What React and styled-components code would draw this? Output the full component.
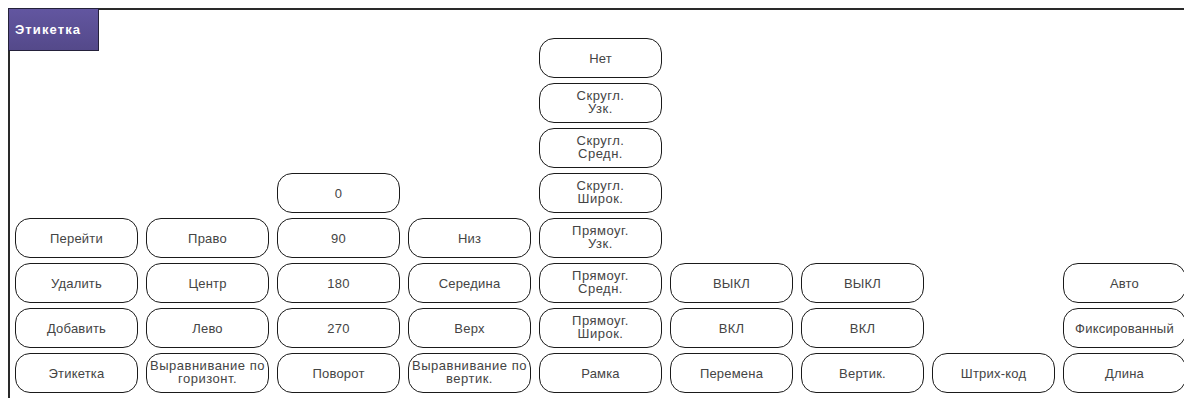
import React from 'react'
import styled, { createGlobalStyle } from 'styled-components'

const GlobalStyle = createGlobalStyle`
  html, body {
    margin: 0;
    background: #fff;
    overflow: hidden;
  }
  body {
    padding: 8px 0 0 8px;
    font-family: "Liberation Sans", Arial, sans-serif;
  }
`

// each column lists its keys from top to bottom, stacked to the bottom edge
const columns = [
  ['Перейти', 'Удалить', 'Добавить', 'Этикетка'],
  ['Право', 'Центр', 'Лево', 'Выравнивание по\nгоризонт.'],
  ['0', '90', '180', '270', 'Поворот'],
  ['Низ', 'Середина', 'Верх', 'Выравнивание по\nвертик.'],
  [
    'Нет',
    'Скругл.\nУзк.',
    'Скругл.\nСредн.',
    'Скругл.\nШирок.',
    'Прямоуг.\nУзк.',
    'Прямоуг.\nСредн.',
    'Прямоуг.\nШирок.',
    'Рамка',
  ],
  ['ВЫКЛ', 'ВКЛ', 'Перемена'],
  ['ВЫКЛ', 'ВКЛ', 'Вертик.'],
  ['Штрих-код'],
  ['Авто', 'Фиксированный', 'Длина'],
]

const App = () => {
  return (
    <>
      <GlobalStyle />
      <Frame>
        <Title>Этикетка</Title>
        <Grid>
          {columns.map((keys, i) => (
            <Column key={i}>
              {keys.map((label, j) => (
                <Key key={j} $tall={label.includes('\n')}>
                  {label}
                </Key>
              ))}
            </Column>
          ))}
        </Grid>
      </Frame>
    </>
  )
}

const Frame = styled.div`
  position: relative;
  width: 1200px;
  height: 390px;
  border-top: 2px solid #2a2a2a;
  border-left: 2px solid #2a2a2a;
  padding: 28px 0 0 5px;
  box-sizing: border-box;
`

const Title = styled.div`
  position: absolute;
  left: -2px;
  top: -2px;
  width: 91px;
  height: 43px;
  box-sizing: border-box;
  display: flex;
  align-items: center;
  padding-left: 6px;
  background: linear-gradient(#6256a0, #54498a);
  border: 1px solid #24213a;
  color: #fff;
  font-weight: bold;
  font-size: 13px;
  letter-spacing: 1.1px;
`

const Grid = styled.div`
  display: flex;
  gap: 8px;
  height: 355px;
`

const Column = styled.div`
  display: flex;
  flex-direction: column;
  justify-content: flex-end;
  gap: 5px;
  width: 123px;
  flex: none;
`

const Key = styled.div`
  height: 40px;
  box-sizing: border-box;
  border: 1.5px solid #1a1a1a;
  border-radius: 15px;
  background: #fff;
  display: flex;
  align-items: center;
  justify-content: center;
  text-align: center;
  white-space: pre-line;
  color: #444;
  font-size: 13px;
  letter-spacing: ${p => (p.$tall ? '0.5px' : '0.2px')};
  line-height: ${p => (p.$tall ? '13px' : '15px')};
  padding-bottom: ${p => (p.$tall ? '2px' : '0')};
`

export default App
